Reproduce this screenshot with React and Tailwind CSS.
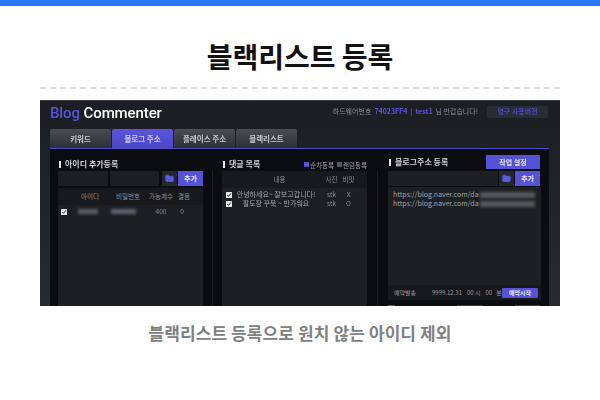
import { Folder } from 'lucide-react';

const font = { fontFamily: '"Noto Sans CJK KR", "Noto Sans", sans-serif' };

function FolderBtn() {
    return (
        <div className="w-[15px] h-[15px] bg-[#24272e] flex items-center justify-center">
            <Folder size={9} fill="#5b5be0" stroke="#5b5be0" />
        </div>
    );
}

function AddBtn({ className }) {
    return (
        <div className={`h-[15px] bg-[#5652d8] flex items-center justify-center text-[7px] font-bold text-[#e4e4f4] ${className}`}>
            추가
        </div>
    );
}

function SectionTitle({ children }) {
    return (
        <div className="flex items-center gap-[4px] pl-[1px] text-[8px] font-bold text-[#cfd0d4] leading-none">
            <span className="w-[2px] h-[7px] bg-[#e8e8e8]" />
            {children}
        </div>
    );
}

function Check() {
    return (
        <svg width="6" height="6" viewBox="0 0 6 6" className="shrink-0">
            <rect width="6" height="6" rx="0.5" fill="#e8e8e8" />
            <path d="M1.2 3 L2.5 4.4 L4.9 1.4" fill="none" stroke="#33353a" strokeWidth="1" />
        </svg>
    );
}

function Tabs() {
    const tabs = ['키워드', '블로그 주소', '플레이스 주소', '블랙리스트'];
    return (
        <div className="flex gap-[1px] ml-[10px] h-[19px]">
            {tabs.map((t, i) => (
                <div
                    key={t}
                    className={`w-[61px] rounded-t-[2px] flex items-center justify-center text-[7.5px] font-bold ${
                        i === 1
                            ? 'bg-gradient-to-b from-[#5a56dc] to-[#4a46c4] text-[#cfcff5]'
                            : 'bg-gradient-to-b from-[#4a4d52] to-[#2e3034] text-[#c8c9cc]'
                    }`}
                >
                    {t}
                </div>
            ))}
        </div>
    );
}

function LeftColumn() {
    return (
        <div className="w-[145px] flex flex-col">
            <div className="h-[22px] flex items-end pb-[3px]">
                <SectionTitle>아이디 추가등록</SectionTitle>
            </div>
            <div className="flex gap-[2px] h-[15px]">
                <div className="w-[50px] bg-[#1d1f24]" />
                <div className="w-[50px] bg-[#1d1f24]" />
                <div className="flex ml-[1px] gap-[1px]">
                    <FolderBtn />
                    <AddBtn className="w-[25px]" />
                </div>
            </div>
            <div className="flex-1 mt-[2px] bg-[#1d1f23] rounded-t-[1px] text-[6.5px] text-[#8d8f95]">
                <div className="grid grid-cols-[14px_36px_40px_26px_20px] h-[17px] items-center text-center bg-[#17191d]">
                    <span />
                    <span>아이디</span>
                    <span>비밀번호</span>
                    <span>가능계수</span>
                    <span>결음</span>
                </div>
                <div className="grid grid-cols-[14px_36px_40px_26px_20px] h-[13px] items-center text-center">
                    <div className="pl-[3px]">
                        <Check />
                    </div>
                    <div className="pl-[6px]">
                        <div className="w-[20px] h-[5px] bg-[#5b5e65] blur-[1.5px]" />
                    </div>
                    <div className="pl-[3px]">
                        <div className="w-[25px] h-[5px] bg-[#5f626b] blur-[1.5px]" />
                    </div>
                    <span>400</span>
                    <span className="pr-[4px]">0</span>
                </div>
            </div>
        </div>
    );
}

function MiddleColumn() {
    return (
        <div className="w-[145px] flex flex-col">
            <div className="h-[22px] flex items-end justify-between pb-[3px]">
                <SectionTitle>댓글 목록</SectionTitle>
                <div className="flex items-center gap-[1px] text-[6.5px] text-[#a0a1a6] leading-none">
                    <span className="w-[5px] h-[5px] bg-[#5652d8]" />
                    <span className="mr-[2px]">순차등록</span>
                    <span className="w-[5px] h-[5px] bg-[#55575c]" />
                    <span>랜덤등록</span>
                </div>
            </div>
            <div className="flex-1 bg-[#1d1f23] text-[6.5px] text-[#8d8f95]">
                <div className="grid grid-cols-[14px_87px_17px_17px] h-[17px] items-center text-center bg-[#17191d]">
                    <span />
                    <span>내용</span>
                    <span>사진</span>
                    <span>비밋</span>
                </div>
                <div className="mt-[2px] flex flex-col">
                    {[
                        ['안녕하세요~ 잘보고갑니다!', 'stk', 'X'],
                        ['팔도장 꾸욱 ~ 반가워요', 'stk', 'O'],
                    ].map(([text, photo, secret]) => (
                        <div key={text} className="grid grid-cols-[14px_87px_17px_17px] h-[9px] items-center text-center leading-none">
                            <div className="pl-[4px]">
                                <Check />
                            </div>
                            <span className="pr-[7px] text-[7px] text-[#a4a5aa] whitespace-nowrap">{text}</span>
                            <span>{photo}</span>
                            <span>{secret}</span>
                        </div>
                    ))}
                </div>
            </div>
        </div>
    );
}

function RightColumn() {
    return (
        <div className="w-[153px] flex flex-col">
            <div className="h-[22px] flex items-start justify-between pt-[6px] pr-[1px]">
                <div className="pt-[3px]">
                    <SectionTitle>블로그주소 등록</SectionTitle>
                </div>
                <div className="w-[54px] h-[14px] bg-[#5652d8] flex items-center justify-center text-[7px] font-bold text-[#e4e4f4]">
                    작업 설정
                </div>
            </div>
            <div className="flex gap-[1px] h-[15px]">
                <div className="w-[110px] bg-[#1d1f24]" />
                <FolderBtn />
                <AddBtn className="w-[25px]" />
            </div>
            <div className="h-[98px] mt-[1px] bg-[#1d1f23] px-[5px] pt-[3px] text-[7px] leading-[9px] text-[#a0a2a8]">
                {[0, 1].map((i) => (
                    <div key={i} className="flex items-center">
                        <span>https://blog.naver.com/da</span>
                        <span className="w-[55px] h-[6px] ml-[1px] bg-[#55585f] blur-[1.5px]" />
                    </div>
                ))}
            </div>
            <div className="h-[15px] bg-[#16181c] flex items-center pl-[6px] pr-[3px] text-[6px] text-[#9a9ca2]">
                <span className="w-[36px]">예약발송</span>
                <span className="ml-[2px]">9999.12.31</span>
                <span className="ml-[5px]">00 시</span>
                <span className="ml-[5px]">00</span>
                <span className="ml-[4px]">분</span>
                <span className="ml-auto w-[36px] h-[10px] rounded-[1px] bg-[#5652d8] flex items-center justify-center font-bold text-[#e4e4f4]">
                    예약시작
                </span>
            </div>
            {/* next row just cut off by the crop */}
            <div className="mt-[5px] h-[1px] flex">
                <span className="w-[7px] bg-[#55575c]" />
                <span className="w-[26px] ml-[62px] bg-[#3a3c41]" />
                <span className="w-[25px] ml-[32px] bg-[#3a3c41]" />
            </div>
        </div>
    );
}

function Screenshot() {
    return (
        <div className="h-[206px] mx-[40px] mt-[11px] bg-gradient-to-b from-[#1c1e23] to-[#272a2f] overflow-hidden border-t border-[#3c3e44]">
            <div className="h-full flex flex-col blur-[0.35px]">
                <div className="h-[28px] flex items-center pl-[10px] pr-[12px] pb-[3px] shrink-0">
                    <div className="text-[15px] font-medium leading-none tracking-[-0.1px] text-white" style={{ fontFamily: 'Roboto, sans-serif' }}>
                        <span className="text-[#5553dc]">Blog</span> Commenter
                    </div>
                    <div className="ml-auto mb-[4px] flex items-center gap-[1px] text-[7px] text-[#8d8f95]">
                        <span>하드웨어번호</span>
                        <span className="text-[#5a56e0] font-bold ml-[2px]">74023FF4</span>
                        <span className="mx-[2px]">|</span>
                        <span className="text-[#5a56e0] font-bold">test1</span>
                        <span className="ml-[2px]">님 반갑습니다!</span>
                        <div className="w-[61px] h-[12px] ml-[8px] bg-[#292c33] flex items-center justify-center text-[#4d4ac0] font-bold">
                            영구 사용버전
                        </div>
                    </div>
                </div>
                <Tabs />
                <div className="flex-1 ml-[10px] mr-[11px] border-t-[1px] border-[#4f4bc8] bg-[#0b0c0f] flex pl-[8px]">
                    <LeftColumn />
                    <div className="w-[1px] bg-[#1d1f23] ml-[9px] mr-[9px] mt-[22px]" />
                    <MiddleColumn />
                    <div className="w-[1px] bg-[#1d1f23] ml-[10px] mr-[10px] mt-[22px]" />
                    <RightColumn />
                </div>
            </div>
        </div>
    );
}

export default function App() {
    return (
        <div className="w-[600px] h-[400px] bg-white overflow-hidden" style={font}>
            <div className="h-[6px] bg-[#2979ff]" />
            <h1 className="mt-[30px] h-[40px] text-[28px] leading-[40px] font-bold text-center text-[#111]">
                블랙리스트 등록
            </h1>
            <div className="mt-[11px] mx-[40px] border-t-2 border-dashed border-[#dcdcdc]" />
            <Screenshot />
            <p className="mt-[15px] text-[17px] leading-[24px] font-bold tracking-[0.1px] text-center text-[#808080]">
                블랙리스트 등록으로 원치 않는 아이디 제외
            </p>
        </div>
    );
}
